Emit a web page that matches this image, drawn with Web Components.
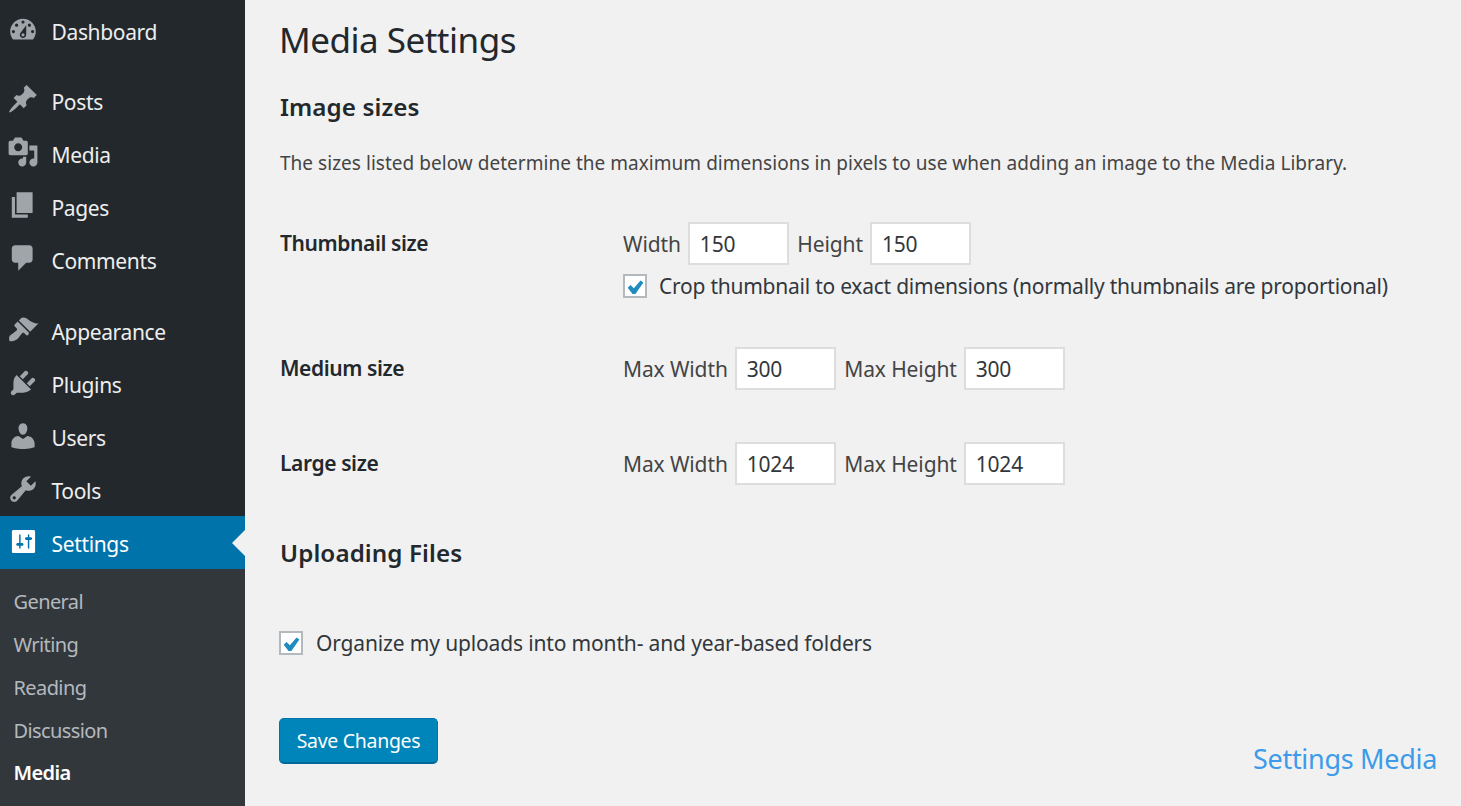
<!DOCTYPE html>
<html lang="en">
<head>
<meta charset="utf-8">
<title>Media Settings</title>
<style>
  html, body { margin: 0; height: 100%; overflow: hidden; background: #f1f1f1; }
  body { font-family: "Noto Sans", "Open Sans", sans-serif; }
</style>
</head>
<body>
<wp-admin>
  <wp-menu slot="menu">
    <wp-menu-item icon="dashboard" first>Dashboard</wp-menu-item>
    <wp-menu-item icon="pin" style="margin-top:16.5px">Posts</wp-menu-item>
    <wp-menu-item icon="media">Media</wp-menu-item>
    <wp-menu-item icon="page">Pages</wp-menu-item>
    <wp-menu-item icon="comments">Comments</wp-menu-item>
    <wp-menu-item icon="appearance" style="margin-top:18.5px">Appearance</wp-menu-item>
    <wp-menu-item icon="plugins">Plugins</wp-menu-item>
    <wp-menu-item icon="users">Users</wp-menu-item>
    <wp-menu-item icon="tools">Tools</wp-menu-item>
    <wp-menu-item icon="settings" current>Settings</wp-menu-item>
    <wp-submenu>
      <wp-submenu-item>General</wp-submenu-item>
      <wp-submenu-item>Writing</wp-submenu-item>
      <wp-submenu-item>Reading</wp-submenu-item>
      <wp-submenu-item>Discussion</wp-submenu-item>
      <wp-submenu-item current>Media</wp-submenu-item>
    </wp-submenu>
  </wp-menu>

  <wp-heading level="1" style="margin-top:19px;margin-left:-1px">Media Settings</wp-heading>
  <wp-heading level="2" style="margin-top:31px">Image sizes</wp-heading>
  <wp-note>The sizes listed below determine the maximum dimensions in pixels to use when adding an image to the Media Library.</wp-note>

  <wp-setting label="Thumbnail size" style="margin-top:45px">
    <wp-size name="Width" value="150"></wp-size>
    <wp-size name="Height" value="150"></wp-size>
    <wp-check slot="below" style="margin-top:7px;letter-spacing:-0.24px;--check-gap:12px">Crop thumbnail to exact dimensions (normally thumbnails are proportional)</wp-check>
  </wp-setting>
  <wp-setting label="Medium size" style="margin-top:47px">
    <wp-size name="Max Width" value="300"></wp-size>
    <wp-size name="Max Height" value="300"></wp-size>
  </wp-setting>
  <wp-setting label="Large size" style="margin-top:52px">
    <wp-size name="Max Width" value="1024"></wp-size>
    <wp-size name="Max Height" value="1024"></wp-size>
  </wp-setting>

  <wp-heading level="2" style="margin-top:53px">Uploading Files</wp-heading>
  <wp-check style="margin-top:61px;margin-left:-1px">Organize my uploads into month- and year-based folders</wp-check>

  <wp-footer>
    <wp-button>Save Changes</wp-button>
    <span slot="caption">Settings Media</span>
  </wp-footer>
</wp-admin>

<script>
(function () {
  // dashicons, 20 unit grid
  const icons = {
    dashboard: "M3.76 16h12.48c1.1-1.37 1.76-3.11 1.76-5 0-4.42-3.58-8-8-8s-8 3.58-8 8c0 1.89.66 3.63 1.76 5zM10 4c.55 0 1 .45 1 1s-.45 1-1 1-1-.45-1-1 .45-1 1-1zM6 6c.55 0 1 .45 1 1s-.45 1-1 1-1-.45-1-1 .45-1 1-1zm8 0c.55 0 1 .45 1 1s-.45 1-1 1-1-.45-1-1 .45-1 1-1zm-5.37 5.55L12 7v6c0 1.1-.9 2-2 2s-2-.9-2-2c0-.57.24-1.08.63-1.45zM4 10c.55 0 1 .45 1 1s-.45 1-1 1-1-.45-1-1 .45-1 1-1zm12 0c.55 0 1 .45 1 1s-.45 1-1 1-1-.45-1-1 .45-1 1-1zm-5 3c0-.55-.45-1-1-1s-1 .45-1 1 .45 1 1 1 1-.45 1-1z",
    pin: "M10.44 3.02l1.82-1.82 6.36 6.35-1.83 1.82c-1.05-.68-2.48-.57-3.41.36l-.75.75c-.92.93-1.04 2.35-.35 3.41l-1.83 1.82-2.41-2.41-2.8 2.79c-.42.42-3.38 2.71-3.8 2.29s1.86-3.39 2.28-3.81l2.79-2.79L4.1 9.36l1.83-1.82c1.05.69 2.48.57 3.4-.36l.75-.75c.93-.92 1.05-2.35.36-3.41z",
    media: "M13 11V4c0-.55-.45-1-1-1h-1.67L9 1H5L3.67 3H2c-.55 0-1 .45-1 1v7c0 .55.45 1 1 1h10c.55 0 1-.45 1-1zM7 4.5c1.38 0 2.5 1.12 2.5 2.5S8.38 9.5 7 9.5 4.5 8.38 4.5 7 5.62 4.5 7 4.5zM14 6h5v10.5c0 1.38-1.12 2.5-2.5 2.5S14 17.88 14 16.5s1.12-2.5 2.5-2.5c.17 0 .34.02.5.05V9h-3V6zm-4 8.05V13h2v3.5c0 1.38-1.12 2.5-2.5 2.5S7 17.88 7 16.5 8.12 14 9.5 14c.17 0 .34.02.5.05z",
    page: "M6 15V2h10v13H6zm-1 1h8v2H3V5h2v11z",
    comments: "M5 2h9c1.1 0 2 .9 2 2v7c0 1.1-.9 2-2 2h-2l-5 5v-5H5c-1.1 0-2-.9-2-2V4c0-1.1.9-2 2-2z",
    appearance: "M14.48 11.06L7.41 3.99l1.5-1.5c.5-.56 2.3-.47 3.51.32 1.21.8 1.43 1.28 2.91 2.1 1.18.64 2.45 1.26 4.45.85zm-.71.71L6.7 4.7 4.93 6.47c-.39.39-.39 1.02 0 1.41l1.06 1.06c.39.39.39 1.03 0 1.42-.6.6-1.43 1.11-2.21 1.69-.35.26-.7.53-1.01.84C1.43 13.23.91 15.33 1.7 17.1c1.91 0 3.87-.53 5.19-1.86.31-.31.58-.66.84-1.01.58-.78 1.09-1.61 1.69-2.21.39-.39 1.02-.39 1.41 0l1.06 1.06c.39.39 1.02.39 1.41 0z",
    plugins: "M13.11 4.36L9.87 7.6 8 5.73l3.24-3.24c.35-.34 1.05-.2 1.56.32.52.51.66 1.21.31 1.55zm-8 1.77l.91-1.12 9.01 9.01-1.19.84c-.71.71-2.63 1.16-3.82 1.16H6.14L4.9 17.26c-.59.59-1.54.59-2.12 0-.59-.58-.59-1.53 0-2.12l1.24-1.24v-3.88c0-1.13.4-3.19 1.09-3.89zm7.26 3.97l3.24-3.24c.34-.35 1.04-.21 1.55.31.52.51.66 1.21.31 1.55l-3.24 3.25z",
    users: "M10 9.25c-2.27 0-2.73-3.44-2.73-3.44C7 4.02 7.82 2 9.97 2c2.16 0 2.98 2.02 2.71 3.81 0 0-.41 3.44-2.68 3.44zm0 2.57L12.72 10c2.39 0 4.52 2.33 4.52 4.53v2.49s-3.65 1.13-7.24 1.13c-3.65 0-7.24-1.13-7.24-1.13v-2.49c0-2.25 1.94-4.48 4.47-4.48z",
    tools: "M16.68 9.77c-1.34 1.34-3.3 1.67-4.95.99l-5.41 6.52c-.99.99-2.59.99-3.58 0s-.99-2.59 0-3.57l6.52-5.42c-.68-1.65-.35-3.61.99-4.95 1.28-1.28 3.12-1.62 4.72-1.06l-2.89 2.89 2.82 2.82 2.86-2.87c.53 1.58.18 3.39-1.08 4.65zM3.81 16.21c.4.39 1.04.39 1.43 0 .4-.4.4-1.04 0-1.43-.39-.4-1.03-.4-1.43 0-.39.39-.39 1.03 0 1.43z",
    settings: "M18 17V3c0-.55-.45-1-1-1H3c-.55 0-1 .45-1 1v14c0 .55.45 1 1 1h14c.55 0 1-.45 1-1zM8 11h1c.55 0 1 .45 1 1s-.45 1-1 1H8v1.5c0 .28-.22.5-.5.5s-.5-.22-.5-.5V13H6c-.55 0-1-.45-1-1s.45-1 1-1h1V5.5c0-.28.22-.5.5-.5s.5.22.5.5V11zm5-2h-1c-.55 0-1-.45-1-1s.45-1 1-1h1V5.5c0-.28.22-.5.5-.5s.5.22.5.5V7h1c.55 0 1 .45 1 1s-.45 1-1 1h-1v5.5c0 .28-.22.5-.5.5s-.5-.22-.5-.5V9z",
  };

  // small helper so each element is just a class with a template string
  function shadowElement(html) {
    return class extends HTMLElement {
      constructor() {
        super();
        this.attachShadow({ mode: "open" }).innerHTML = typeof html === "function" ? html(this) : html;
      }
    };
  }

  customElements.define("wp-admin", shadowElement(`
    <style>
      :host { display: flex; height: 806px; background: #f1f1f1; }
      aside { flex: 0 0 245px; display: flex; }
      main { flex: 1; min-width: 0; padding: 0 24px 0 35px; display: flex; flex-direction: column; }
    </style>
    <aside><slot name="menu"></slot></aside>
    <main><slot></slot></main>
  `));

  customElements.define("wp-menu", shadowElement(`
    <style>
      :host { display: flex; flex-direction: column; flex: 1; padding-top: 4px; background: #23282d; }
    </style>
    <slot></slot>
  `));

  customElements.define("wp-menu-item", shadowElement((el) => `
    <style>
      :host {
        display: flex; align-items: center; position: relative; height: 53px;
        color: #eee; font-size: 21px; letter-spacing: -0.35px; padding-left: 51.5px; box-sizing: border-box;
      }
      :host([current]) { background: #0073aa; color: #fff; }
      :host([current]) svg { fill: #fff; left: 9px; top: 11px; width: 29px; height: 29px; }
      :host([current])::after {
        content: ""; position: absolute; right: 0; top: 14px;
        border: 13px solid transparent; border-left-width: 0; border-right-color: #f1f1f1;
      }
      svg { position: absolute; left: 7px; top: 9.5px; width: 32px; height: 32px; fill: #a0a5aa; }
      span { position: relative; top: 1.5px; }
    </style>
    <svg viewBox="0 0 20 20"><path d="${icons[el.getAttribute("icon")]}"/></svg>
    <span><slot></slot></span>
  `));

  customElements.define("wp-submenu", shadowElement(`
    <style>
      :host { display: flex; flex-direction: column; flex: 1; padding-top: 11.3px; background: #32373c; }
    </style>
    <slot></slot>
  `));

  customElements.define("wp-submenu-item", shadowElement(`
    <style>
      :host {
        display: flex; align-items: center; height: 42.8px; padding-left: 13.5px;
        color: #b4b9be; font-size: 20px; letter-spacing: -0.6px;
      }
      :host([current]) { color: #fff; font-weight: 600; }
    </style>
    <slot></slot>
  `));

  customElements.define("wp-heading", shadowElement((el) => `
    <style>
      :host { display: block; color: #23282d; }
      .l1 { font-size: 35px; line-height: 42px; font-weight: 400; letter-spacing: -0.5px; }
      .l2 { font-size: 24.2px; line-height: 30px; font-weight: 600; letter-spacing: 0.1px; }
    </style>
    <div class="l${el.getAttribute("level")}"><slot></slot></div>
  `));

  customElements.define("wp-note", shadowElement(`
    <style>
      :host { display: block; margin-top: 27px; color: #444; font-size: 19px; line-height: 28px; letter-spacing: 0.03px; white-space: nowrap; }
    </style>
    <slot></slot>
  `));

  customElements.define("wp-setting", shadowElement((el) => `
    <style>
      :host { display: grid; grid-template-columns: 343px 1fr; color: #444; }
      .label { height: 41px; display: flex; align-items: center; font-size: 21px; font-weight: 600; color: #23282d; letter-spacing: -0.4px; }
      .fields { display: flex; gap: 8px; }
    </style>
    <div class="label">${el.getAttribute("label")}</div>
    <div>
      <div class="fields"><slot></slot></div>
      <slot name="below"></slot>
    </div>
  `));

  customElements.define("wp-size", shadowElement((el) => `
    <style>
      :host { display: flex; align-items: center; gap: 7.5px; font-size: 21px; letter-spacing: -0.12px; color: #444; }
      .box {
        width: 101px; height: 43px; box-sizing: border-box; border: 2px solid #ddd; background: #fff;
        display: flex; align-items: center; padding-left: 9.5px; color: #32373c; letter-spacing: -0.2px;
      }
    </style>
    <span>${el.getAttribute("name")}</span>
    <span class="box">${el.getAttribute("value")}</span>
  `));

  customElements.define("wp-check", shadowElement(`
    <style>
      :host { display: flex; align-items: center; gap: var(--check-gap, 13px); font-size: 21px; line-height: 28px; letter-spacing: -0.15px; color: #32373c; white-space: nowrap; }
      .box { flex: none; width: 24px; height: 24px; box-sizing: border-box; border: 2px solid #b4b9be; background: #fff; display: flex; align-items: center; justify-content: center; }
      svg { width: 19px; height: 19px; fill: #1e8cbe; }
    </style>
    <span class="box"><svg viewBox="0 0 20 20"><path d="M15.3 3.7l3 2.2-8.4 12h-3L1.8 11.2l2.9-2.7 3.6 3.4z"/></svg></span>
    <span><slot></slot></span>
  `));

  customElements.define("wp-footer", shadowElement(`
    <style>
      :host { display: flex; justify-content: space-between; align-items: flex-end; margin-top: 61px; margin-left: -1px; }
      .caption { color: #3d9be9; font-size: 27px; line-height: 34px; letter-spacing: -0.3px; margin-bottom: -12px; }
    </style>
    <slot></slot>
    <div class="caption"><slot name="caption"></slot></div>
  `));

  customElements.define("wp-button", shadowElement(`
    <style>
      :host {
        display: flex; align-items: center; justify-content: center; width: 159px; height: 46px; box-sizing: border-box;
        background: #0085ba; border: 1px solid #0073aa; border-bottom: 2px solid #006799; border-radius: 5px;
        color: #fff; font-size: 19.5px; letter-spacing: -0.3px;
      }
    </style>
    <slot></slot>
  `));
})();
</script>
</body>
</html>
